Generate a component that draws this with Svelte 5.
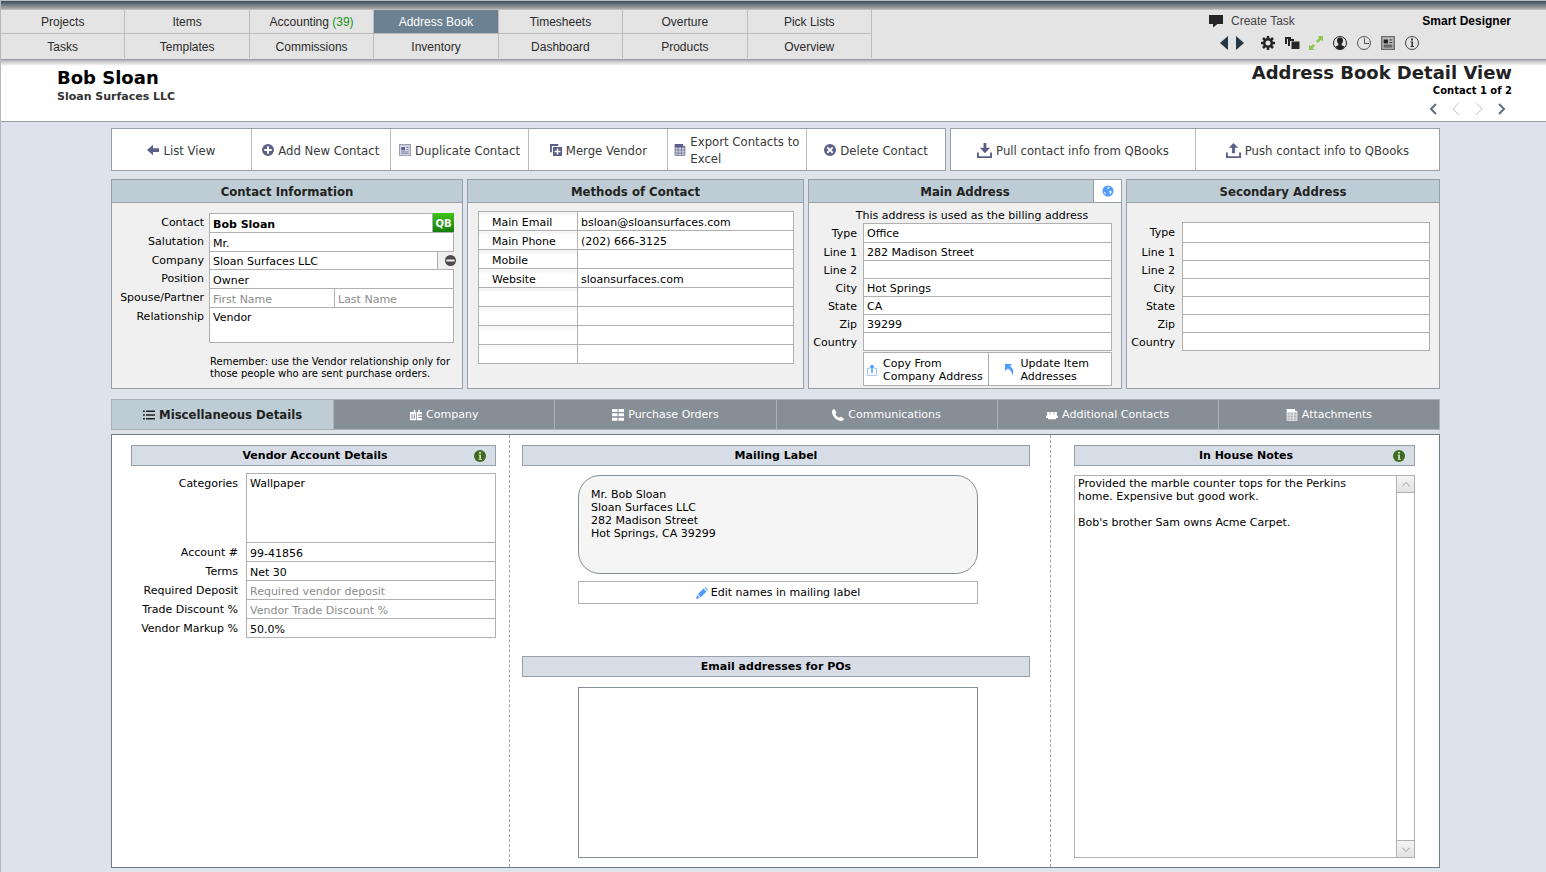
<script lang="ts">
  type Row = { id: string; label: string; value?: string; placeholder?: string }

  const nav = [
    'Projects', 'Items', 'Accounting', 'Address Book', 'Timesheets', 'Overture', 'Pick Lists',
    'Tasks', 'Templates', 'Commissions', 'Inventory', 'Dashboard', 'Products', 'Overview',
  ]
  const current = 'Address Book'

  const actions = [
    { icon: 'back', label: 'List View' },
    { icon: 'add', label: 'Add New Contact' },
    { icon: 'news', label: 'Duplicate Contact' },
    { icon: 'merge', label: 'Merge Vendor' },
    { icon: 'sheet', label: 'Export Contacts to Excel' },
    { icon: 'remove', label: 'Delete Contact' },
  ]

  const syncActions = [
    { icon: 'pull', label: 'Pull contact info from QBooks' },
    { icon: 'push', label: 'Push contact info to QBooks' },
  ]

  const methods = [
    ['Main Email', 'bsloan@sloansurfaces.com'],
    ['Main Phone', '(202) 666-3125'],
    ['Mobile', ''],
    ['Website', 'sloansurfaces.com'],
    ['', ''],
    ['', ''],
    ['', ''],
    ['', ''],
  ]

  const addressLabels = ['Type', 'Line 1', 'Line 2', 'City', 'State', 'Zip', 'Country']
  const mainValues = ['Office', '282 Madison Street', '', 'Hot Springs', 'CA', '39299', '']

  const tabs = [
    { icon: 'list', label: 'Miscellaneous Details' },
    { icon: 'company', label: 'Company' },
    { icon: 'orders', label: 'Purchase Orders' },
    { icon: 'phone', label: 'Communications' },
    { icon: 'people', label: 'Additional Contacts' },
    { icon: 'sheet', label: 'Attachments' },
  ]
  let activeTab = $state('Miscellaneous Details')

  const vendorRows: Row[] = [
    { id: 'account', label: 'Account #', value: '99-41856' },
    { id: 'terms', label: 'Terms', value: 'Net 30' },
    { id: 'deposit', label: 'Required Deposit', placeholder: 'Required vendor deposit' },
    { id: 'discount', label: 'Trade Discount %', placeholder: 'Vendor Trade Discount %' },
    { id: 'markup', label: 'Vendor Markup %', value: '50.0%' },
  ]

  const notes =
    "Provided the marble counter tops for the Perkins home. Expensive but good work.\n\nBob's brother Sam owns Acme Carpet."

  const icons: Record<string, string> = {
    back: 'M0 8 8 1v4.500h8v5H8V15Z',
    add: 'M8 0a8 8 0 1 0 0 16A8 8 0 0 0 8 0ZM6.6 3h2.8v3.6H13v2.8H9.4V13H6.6V9.4H3V6.6h3.6Z',
    remove: 'M8 0a8 8 0 1 0 0 16A8 8 0 0 0 8 0ZM5.3 3.5 8 6.2l2.7-2.7 1.8 1.8L9.8 8l2.7 2.7-1.8 1.8L8 9.8l-2.7 2.7-1.8-1.8L6.2 8 3.5 5.3Z',
    minus: 'M8 0a8 8 0 1 0 0 16A8 8 0 0 0 8 0ZM2 6.5h12v3H2Z',
    merge: 'M0 0h11v2.5H2.5V11H0ZM4 4h12v12H4ZM9 6v3H6v2h3v3h2v-3h3V9h-3V6Z',
    pull: 'M7 0h3v5h4L8.500 11 3 5h4ZM0 10h2v4h12v-4h2v6H0Z',
    push: 'M8 0l5 5H9.500v6h-3V5H3ZM0 10h2v4h12v-4h2v6H0Z',
    list: 'M0 2h2.500v2H0ZM4 2h12v2H4ZM0 7h2.500v2H0ZM4 7h12v2H4ZM0 12h2.500v2H0ZM4 12h12v2H4Z',
    orders: 'M0 0h7.300v4H0ZM8.700 0H16v4H8.700ZM0 5.700h7.300v4H0ZM8.700 5.700H16v4H8.700ZM0 11.500h7.300v4H0ZM8.700 11.500H16v4H8.700Z',
    phone: 'M3 0 6 4.500 4.500 6.500C5.500 9 7 10.500 9.500 11.500L11.500 10 16 13c-.5 2-2 3-4 3C6 15.500.5 10 0 4 0 2 1 .5 3 0Z',
    people: 'M1.500 4H5v3.500h.8V4h4.400v3.500h.8V4h3.500v4l1.500 2v2h-3l.5 1.500h-11L3 12H0v-2l1.500-2Z',
    company: 'M0 4h5V1h2v3h1v11H0ZM2 7v6h1.500V7ZM5 7v6h1.500V7ZM9 4h2V1h2v3h3v3h-5v1.500h5v2h-5V12h5v3H9Z',
  }
</script>

{#snippet icon(name: string, size = 12)}
  <svg class="icon" width={size} height={size} viewBox="0 0 16 16" aria-hidden="true">
    {#if name === 'news'}
      <path d="M1 1h14v14H1Z" fill="currentColor" opacity="0.2" />
      <path d="M0 0h16v16H0ZM1.500 1.500v13h13v-13Z" fill="currentColor" fill-rule="evenodd" opacity="0.6" />
      <path d="M3 4h5v4.500H3Z" fill="currentColor" />
      <path d="M9.500 4.500H13M9.500 7.500H13M3 10.500h10M3 12.500h10" stroke="currentColor" />
    {:else if name === 'sheet'}
      <path d="M1 0h10l4 3v13H1Z" fill="currentColor" opacity="0.35" />
      <path d="M1 0h11v3h3v1.500H1Z" fill="currentColor" />
      <path d="M1.500 4v11.500h13V4M1 8h14M1 12h14M5.500 4v12M10 4v12" stroke="currentColor" fill="none" opacity="0.75" />
    {:else}
      <path d={icons[name]} fill="currentColor" fill-rule="evenodd" />
    {/if}
  </svg>
{/snippet}

{#snippet info()}
  <svg width="12" height="12" viewBox="0 0 12 12" aria-hidden="true">
    <circle cx="6" cy="6" r="6" fill="#3f6b1e" />
    <path d="M5 2h2v1.500H5ZM4.500 4.800H7V9h1v.8H4.500V9h.8V5.600h-.8Z" fill="#d8e4cf" />
  </svg>
{/snippet}

<div class="page">
  <header class="topbar">
    <nav>
      {#each nav as item}
        <a href="#{item}" class:current={item === current}>
          {item}{#if item === 'Accounting'}&nbsp;<span class="count">(39)</span>{/if}
        </a>
      {/each}
    </nav>
    <div class="tools">
      <div class="tools-row">
        <button class="task">
          <svg width="14" height="14" viewBox="0 0 14 14" aria-hidden="true">
            <path d="M0 1h14v9H8.500L4 13.500V10H0Z" fill="#262626" />
          </svg>
          Create Task
        </button>
        <strong>Smart Designer</strong>
      </div>
      <div class="tool-icons">
        <button aria-label="Back"><svg width="8" height="16" viewBox="0 0 8 16"><path d="M0 8 8 1v14Z" fill="#263845" /></svg></button>
        <button aria-label="Forward"><svg width="8" height="16" viewBox="0 0 8 16"><path d="M8 8 0 1v14Z" fill="#263845" /></svg></button>
        <button class="first" aria-label="Settings">
          <svg width="16" height="16" viewBox="0 0 16 16">
            <circle cx="8" cy="8" r="3.800" fill="none" stroke="#222" stroke-width="2.600" />
            <path d="M8 1v2.500M8 12.500V15M1 8h2.500M12.500 8H15M3 3l2 2M11 11l2 2M13 3l-2 2M5 11l-2 2" stroke="#222" stroke-width="2.500" />
          </svg>
        </button>
        <button aria-label="Windows">
          <svg width="16" height="16" viewBox="0 0 16 16">
            <path d="M1 2h6v2H3v5H1ZM4 4h6v2H6v5H4ZM7.500 6.500h8V14h-8Z" fill="#262626" />
          </svg>
        </button>
        <button aria-label="Expand">
          <svg width="16" height="16" viewBox="0 0 16 16">
            <path d="M9.500 1H15v5.500l-1.800-1.800-3.400 3.400-1.900-1.900 3.400-3.400ZM1 9.500l1.800 1.800 2.400-2.400 1.900 1.900-2.400 2.400L6.500 15H1Z" fill="#8cc751" />
          </svg>
        </button>
        <button aria-label="Profile">
          <svg width="16" height="16" viewBox="0 0 16 16">
            <circle cx="8" cy="8" r="6.500" fill="none" stroke="#222" />
            <path d="M8 2.500c2 0 3 1.200 3 3 0 1.500-.6 2.500-1.400 3.300v1.400l2.900 1.300C11.500 13.500 10 14.500 8 14.500S4.500 13.500 3.500 11.500l2.900-1.300V8.800C5.600 8 5 7 5 5.500c0-1.800 1-3 3-3Z" fill="#222" />
          </svg>
        </button>
        <button aria-label="History">
          <svg width="16" height="16" viewBox="0 0 16 16" fill="none" stroke="#555">
            <circle cx="8" cy="8" r="6.500" />
            <path d="M8.500 3v5.500H13" />
          </svg>
        </button>
        <button class="dark" aria-label="News">{@render icon('news', 14)}</button>
        <button aria-label="Information">
          <svg width="16" height="16" viewBox="0 0 16 16">
            <circle cx="8" cy="8" r="6.500" fill="none" stroke="#444" />
            <path d="M7 3.500h2v2H7ZM6.500 6.500H9V11h1v1H6.500v-1h1V7.500h-1Z" fill="#333" />
          </svg>
        </button>
      </div>
    </div>
  </header>

  <section class="title">
    <div>
      <h1>Bob Sloan</h1>
      <p>Sloan Surfaces LLC</p>
    </div>
    <div class="view">
      <h2>Address Book Detail View</h2>
      <p>Contact 1 of 2</p>
      <div class="pager">
        <button aria-label="First"><svg width="8" height="12" viewBox="0 0 8 12"><path d="M7 1 2 6l5 5" /></svg></button>
        <button class="off" aria-label="Previous"><svg width="8" height="12" viewBox="0 0 8 12"><path d="M7 0 1 6l6 6" /></svg></button>
        <button class="off" aria-label="Next"><svg width="8" height="12" viewBox="0 0 8 12"><path d="M1 0l6 6-6 6" /></svg></button>
        <button aria-label="Last"><svg width="8" height="12" viewBox="0 0 8 12"><path d="M1 1l5 5-5 5" /></svg></button>
      </div>
    </div>
  </section>

  <main>
    <div class="toolbar">
      <div class="group">
        {#each actions as action}
          <button>{@render icon(action.icon)}<span>{action.label}</span></button>
        {/each}
      </div>
      <div class="group sync">
        {#each syncActions as action}
          <button>{@render icon(action.icon, 15)}<span>{action.label}</span></button>
        {/each}
      </div>
    </div>

    <div class="panels">
      <section class="panel">
        <h3>Contact Information</h3>
        <div class="fields contact">
          <div class="row">
            <label for="contact">Contact</label>
            <div class="split">
              <input id="contact" class="strong" value="Bob Sloan" />
              <button class="qb">QB</button>
            </div>
          </div>
          <div class="row">
            <label for="salutation">Salutation</label>
            <input id="salutation" value="Mr." />
          </div>
          <div class="row short">
            <label for="company">Company</label>
            <div class="split">
              <input id="company" value="Sloan Surfaces LLC" />
              <button class="clear" aria-label="Remove company">{@render icon('minus', 11)}</button>
            </div>
          </div>
          <div class="row">
            <label for="position">Position</label>
            <input id="position" value="Owner" />
          </div>
          <div class="row">
            <label for="first-name">Spouse/Partner</label>
            <div class="split names">
              <input id="first-name" placeholder="First Name" />
              <input aria-label="Last Name" placeholder="Last Name" />
            </div>
          </div>
          <div class="row">
            <label for="relationship">Relationship</label>
            <textarea id="relationship" class="relationship">Vendor</textarea>
          </div>
          <p class="hint">Remember: use the Vendor relationship only for those people who are sent purchase orders.</p>
        </div>
      </section>

      <section class="panel">
        <h3>Methods of Contact</h3>
        <table>
          <tbody>
            {#each methods as [kind, value]}
              <tr>
                <th scope="row">{kind}</th>
                <td>{value}</td>
              </tr>
            {/each}
          </tbody>
        </table>
      </section>

      <section class="panel">
        <div class="panel-head">
          <h3>Main Address</h3>
          <button aria-label="Open map">
            <svg width="12" height="12" viewBox="0 0 12 12">
              <circle cx="6" cy="6" r="5.500" fill="#4f9bff" />
              <path d="M6.500 1.500 8 2 7 3.500l-1.500.7-.5-1.200ZM6.500 6l2-.5 1.500 1-.8 2L8 9.500 7.500 8ZM1.800 6.500 3.500 7.500l.5 2L2.500 9Z" fill="#d3e5ff" />
            </svg>
          </button>
        </div>
        <p class="billing">This address is used as the billing address</p>
        <div class="fields address">
          {#each addressLabels as label, i}
            <div class="row">
              <label for="main-{i}">{label}</label>
              <input id="main-{i}" value={mainValues[i]} />
            </div>
          {/each}
          <div class="address-actions">
            <button>
              <svg width="10" height="12" viewBox="0 0 10 12" fill="none">
                <path d="M3 4.500H.5v7h9v-7H7" stroke="#a9cdfb" />
                <path d="M5 9V2M3 3.500l2-2 2 2" stroke="#4f9bff" stroke-width="1.500" />
              </svg>
              <span>Copy From Company Address</span>
            </button>
            <button>
              <svg width="9" height="12" viewBox="0 0 9 12">
                <path d="M0 0h7L5 2.200C8 4 9 7 7.500 12 7.500 9 6 6.500 3 4.500L0 7Z" fill="#4f9bff" />
              </svg>
              <span>Update Item Addresses</span>
            </button>
          </div>
        </div>
      </section>

      <section class="panel">
        <h3>Secondary Address</h3>
        <div class="fields address secondary">
          {#each addressLabels as label, i}
            <div class="row">
              <label for="second-{i}">{label}</label>
              <input id="second-{i}" />
            </div>
          {/each}
        </div>
      </section>
    </div>

    <div class="tabs" role="tablist">
      {#each tabs as tab}
        <button
          role="tab"
          aria-selected={tab.label === activeTab}
          class:active={tab.label === activeTab}
          onclick={() => (activeTab = tab.label)}
        >
          {@render icon(tab.icon)}<span>{tab.label}</span>
        </button>
      {/each}
    </div>

    <div class="details">
      <section class="vendor">
        <h4>Vendor Account Details {@render info()}</h4>
        <div class="fields">
          <div class="row">
            <label for="categories">Categories</label>
            <textarea id="categories" class="categories">Wallpaper</textarea>
          </div>
          {#each vendorRows as row}
            <div class="row">
              <label for={row.id}>{row.label}</label>
              <input id={row.id} value={row.value ?? ''} placeholder={row.placeholder} />
            </div>
          {/each}
        </div>
      </section>

      <section class="mailing">
        <h4>Mailing Label</h4>
        <address>
          Mr. Bob Sloan<br />
          Sloan Surfaces LLC<br />
          282 Madison Street<br />
          Hot Springs, CA 39299
        </address>
        <button class="edit">
          <svg width="12" height="12" viewBox="0 0 12 12">
            <path d="M0 12l1-4 3 3ZM1.800 7.200 7.500 1.500l3 3-5.700 5.700ZM8.500.8 9.300 0 12 2.700l-.8.8Z" fill="#4f9bff" />
          </svg>
          Edit names in mailing label
        </button>
        <h4>Email addresses for POs</h4>
        <textarea class="emails" aria-label="Email addresses for POs"></textarea>
      </section>

      <section class="notes">
        <h4>In House Notes {@render info()}</h4>
        <div class="notes-box">
          <textarea aria-label="In House Notes">{notes}</textarea>
          <div class="scroll">
            <button aria-label="Scroll up"><svg width="8" height="5" viewBox="0 0 8 5"><path d="M0 4.500l4-4 4 4" /></svg></button>
            <button aria-label="Scroll down"><svg width="8" height="5" viewBox="0 0 8 5"><path d="M0 .5l4 4 4-4" /></svg></button>
          </div>
        </div>
      </section>
    </div>
  </main>
</div>

<style>
  :global(body) {
    background: #dee2ea;
  }

  .page {
    box-sizing: border-box;
    min-height: 100vh;
    border-left: 1px solid #b5b8bc;
    font-family: 'DejaVu Sans', Verdana, sans-serif;
    font-size: 11px;
    line-height: 13px;
    color: #000;
  }
  .page :global(*) {
    box-sizing: border-box;
  }

  h1, h2, h3, h4, p {
    margin: 0;
  }
  button, input, textarea {
    margin: 0;
    border: 0;
    border-radius: 0;
    padding: 0;
    background: none;
    font: inherit;
    color: inherit;
  }
  button {
    display: flex;
    align-items: center;
    justify-content: center;
    cursor: pointer;
  }
  textarea {
    display: block;
    resize: none;
    overflow: hidden;
  }
  ::placeholder {
    color: #8c8c8c;
    opacity: 1;
  }
  svg {
    flex: none;
    display: block;
  }

  .topbar {
    display: grid;
    grid-template-columns: 871fr 674fr;
    border-bottom: 1px solid #979ba3;
    height: 60px;
    padding-top: 10px;
    background: linear-gradient(#b9c0c4 1px, #3c4d59 1px, #a9acae 9px, #bcbcbc 9px, #bcbcbc 10px, #e4e4e4 10px);
    font-family: 'Liberation Sans', Arial, sans-serif;
    font-size: 12px;
  }
  nav {
    display: grid;
    grid-template-columns: repeat(7, 1fr);
    grid-template-rows: 24px 24px;
  }
  nav a {
    display: flex;
    align-items: center;
    justify-content: center;
    border-right: 1px solid #bcbcbc;
    border-bottom: 1px solid #bcbcbc;
    padding-top: 1px;
    color: #2b2b2b;
    text-decoration: none;
  }
  nav a:nth-child(n + 8) {
    border-bottom: 0;
    padding-top: 2px;
  }
  nav a.current {
    background: #6c8292;
    color: #fff;
  }
  .count {
    color: #149322;
  }

  .tools {
    justify-self: end;
    width: 302px;
    margin-right: 35px;
    padding-top: 3px;
  }
  .tools-row {
    display: flex;
    align-items: center;
    justify-content: space-between;
    height: 16px;
  }
  .task {
    gap: 8px;
    color: #444;
  }
  .tool-icons {
    display: flex;
    gap: 8px;
    padding: 6px 0 0 11px;
  }
  .tool-icons .first {
    margin-left: 8px;
  }
  .tool-icons .dark {
    width: 16px;
    color: #222;
  }

  .title {
    display: flex;
    justify-content: space-between;
    border-bottom: 1px solid #979ba3;
    height: 62px;
    padding: 3px 34px 0 56px;
    background: linear-gradient(#b4b4b4, #fff 6px);
    font-weight: bold;
  }
  h1, h2 {
    font-size: 18px;
    line-height: 22px;
  }
  h1 {
    padding-top: 4px;
  }
  .title p {
    line-height: 15px;
    color: #333;
  }
  .view {
    text-align: right;
  }
  h2 {
    line-height: 20px;
    color: #222;
  }
  .title .view p {
    font-size: 10px;
    color: #000;
  }
  .pager {
    display: flex;
    justify-content: flex-end;
    gap: 15px;
    padding: 5px 6px 0 0;
  }
  .pager path {
    fill: none;
    stroke: #5d6e7e;
    stroke-width: 2;
  }
  .pager .off path {
    stroke: #c3c7cc;
    stroke-width: 1;
  }

  main {
    margin: 6px 106px 4px 110px;
  }

  .toolbar {
    display: grid;
    grid-template-columns: 835fr 490fr;
    gap: 4px;
    font-family: 'DejaVu Sans Condensed', Tahoma, sans-serif;
    font-size: 13px;
    line-height: 17px;
    color: #3a3a3a;
  }
  .group {
    display: grid;
    grid-template-columns: repeat(6, 1fr);
    border: 1px solid #979fa8;
    height: 43px;
    background: #fff;
  }
  .sync {
    grid-template-columns: 1fr 1fr;
  }
  .group button {
    gap: 4px;
    padding: 1px 6px 0;
    text-align: left;
  }
  .group button + button {
    border-left: 1px solid #bcbcbc;
  }
  .group .icon {
    color: #5c6089;
  }

  .panels {
    display: grid;
    grid-template-columns: 352fr 337fr 314fr 314fr;
    gap: 4px;
    margin-top: 8px;
  }
  .panel {
    border: 1px solid #979fa8;
    height: 210px;
    background: #f0f0f0;
  }
  h3 {
    flex: 1;
    border-bottom: 1px solid #979fa8;
    height: 23px;
    background: #becdd5;
    font-family: 'DejaVu Sans Condensed', Tahoma, sans-serif;
    font-size: 13px;
    line-height: 23px;
    text-align: center;
    color: #222;
  }
  .panel-head {
    display: flex;
  }
  .panel-head h3 {
    padding-left: 28px;
  }
  .panel-head button {
    width: 28px;
    border-left: 1px solid #979fa8;
    border-bottom: 1px solid #979fa8;
    background: #fff;
  }

  .row {
    display: grid;
    grid-template-columns: 92px 1fr;
    column-gap: 5px;
    min-height: 19px;
  }
  .row.short {
    min-height: 18px;
  }
  .row label {
    line-height: 19px;
    height: 18px;
    text-align: right;
    white-space: nowrap;
  }
  .row input, .row textarea {
    width: 100%;
    min-width: 0;
    border: 1px solid #b0b0b0;
    padding: 2px 3px 0;
    background: #fff;
  }
  .row input {
    height: calc(100% + 1px);
  }
  .contact {
    padding: 10px 8px 0 0;
  }
  .split {
    display: flex;
  }
  .strong {
    font-weight: bold;
  }
  .split .qb {
    flex: none;
    width: 21px;
    height: 20px;
    margin-bottom: -1px;
    background: linear-gradient(#3fc517, #13780a);
    font-size: 10px;
    font-weight: bold;
    color: #fff;
  }
  .clear {
    flex: none;
    width: 16px;
    padding-left: 8px;
    color: #4b4b4b;
  }
  .names {
    display: grid;
    grid-template-columns: 126fr 119fr;
  }
  .names input + input {
    border-left: 0;
  }
  .row .relationship {
    height: 36px;
    padding-top: 3px;
  }
  .hint {
    margin: 13px 0 0 98px;
    font-size: 10px;
    line-height: 12px;
  }

  table {
    width: calc(100% - 19px);
    margin: 8px 9px 0 10px;
    border-collapse: collapse;
    table-layout: fixed;
    background: #fff;
  }
  th, td {
    height: 19px;
    border: 1px solid #b0b0b0;
    padding: 2px 3px 0;
    font-weight: normal;
    text-align: left;
  }
  th {
    width: 99px;
    padding-left: 13px;
    background: linear-gradient(#f0f0f0, #fff 4px);
  }

  .billing {
    padding: 6px 0 1px 14px;
    text-align: center;
  }
  .address {
    padding-right: 9px;
  }
  .address .row {
    grid-template-columns: 48px 1fr;
    column-gap: 6px;
    min-height: 18px;
  }
  .address .row:first-child {
    min-height: 19px;
  }
  .address label {
    line-height: 21px;
  }
  .address input {
    padding-top: 1px;
  }
  .secondary {
    padding-top: 19px;
  }
  .secondary .row {
    column-gap: 7px;
  }
  .secondary .row:first-child {
    min-height: 20px;
  }
  .address-actions {
    display: grid;
    grid-template-columns: 125fr 123fr;
    margin: 2px 0 0 54px;
    border: 1px solid #b0b0b0;
    height: 34px;
    background: #fff;
  }
  .address-actions button {
    gap: 6px;
    padding-top: 2px;
    text-align: left;
  }
  .address-actions button:first-child {
    padding-left: 3px;
  }
  .address-actions button + button {
    border-left: 1px solid #b0b0b0;
    padding: 2px 16px 0;
  }

  .tabs {
    display: grid;
    grid-template-columns: repeat(6, 1fr);
    margin-top: 10px;
    border: 1px solid #adb0b3;
    height: 31px;
    background: #868e96;
    color: #fff;
  }
  .tabs button {
    gap: 4px;
  }
  .tabs button + button {
    border-left: 1px solid #adb0b3;
  }
  .tabs .active {
    background: #becdd5;
    font-family: 'DejaVu Sans Condensed', Tahoma, sans-serif;
    font-size: 13px;
    font-weight: bold;
    color: #222;
  }

  .details {
    display: grid;
    grid-template-columns: 397fr 542fr 388fr;
    margin-top: 4px;
    border: 1px solid #6c7f87;
    background: #fff;
  }
  .details section {
    padding-top: 10px;
    padding-bottom: 9px;
  }
  h4 {
    display: flex;
    align-items: center;
    justify-content: center;
    border: 1px solid #979fa8;
    height: 21px;
    background: #d7dde6;
    font-size: 11px;
  }
  .vendor {
    padding-right: 13px;
    padding-left: 19px;
  }
  .vendor h4, .notes h4 {
    display: grid;
    grid-template-columns: 1fr 12px;
    padding: 0 9px 0 24px;
    text-align: center;
  }
  .vendor .fields {
    margin-top: 7px;
  }
  .vendor .row {
    grid-template-columns: 107px 1fr;
    column-gap: 8px;
  }
  .vendor label {
    line-height: 21px;
  }
  .row .categories {
    height: 69px;
    border-bottom: 0;
    padding-top: 3px;
  }
  .mailing {
    padding-right: 20px;
    padding-left: 12px;
    border-right: 1px dashed #a0a6ab;
    border-left: 1px dashed #a0a6ab;
  }
  address, .edit, .emails {
    width: calc(100% - 108px);
    margin: 9px 52px 0 56px;
  }
  address {
    border: 1px solid #868e96;
    border-radius: 22px;
    height: 99px;
    padding: 12px;
    background: #f5f5f5;
    font-style: normal;
  }
  .edit {
    gap: 3px;
    margin-top: 7px;
    margin-bottom: 52px;
    border: 1px solid #b0b0b0;
    height: 23px;
  }
  .emails {
    margin-top: 10px;
    border: 1px solid #868e96;
    height: 171px;
  }
  .notes {
    padding-right: 24px;
    padding-left: 23px;
  }
  .notes-box {
    display: flex;
    margin-top: 9px;
    border: 1px solid #b0b0b0;
    height: 383px;
  }
  .notes-box textarea {
    flex: 1;
    padding: 1px 20px 1px 3px;
  }
  .scroll {
    display: flex;
    flex-direction: column;
    justify-content: space-between;
    width: 18px;
    border-left: 1px solid #b0b0b0;
  }
  .scroll button {
    height: 17px;
    border-bottom: 1px solid #b0b0b0;
    background: linear-gradient(#f5f5f5, #e2e2e2);
  }
  .scroll button:last-child {
    border-top: 1px solid #b0b0b0;
    border-bottom: 0;
  }
  .scroll path {
    fill: none;
    stroke: #999;
  }
</style>
